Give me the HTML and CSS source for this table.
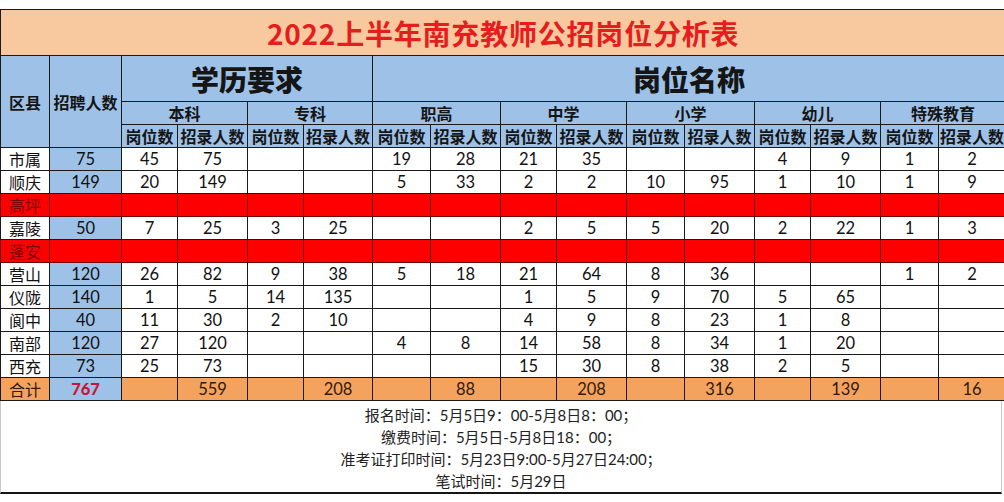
FILE: index.html
```html
<!DOCTYPE html>
<html lang="zh-CN">
<head>
<meta charset="utf-8">
<title>2022上半年南充教师公招岗位分析表</title>
<link rel="stylesheet" href="styles.css">
</head>
<body>
<div class="sheet">
<table class="grid">
  <colgroup>
    <col class="c-area"><col class="c-total">
    <col class="c-n"><col class="c-p">
    <col class="c-n"><col class="c-p2">
    <col class="c-n2"><col class="c-p">
    <col class="c-n"><col class="c-p">
    <col class="c-n2"><col class="c-p">
    <col class="c-n"><col class="c-p">
    <col class="c-n2"><col class="c-p3">
  </colgroup>
  <tr class="r-title"><td colspan="16" class="title">2022上半年南充教师公招岗位分析表</td></tr>
  <tr class="r-h1">
    <td rowspan="3" class="hd">区县</td>
    <td rowspan="3" class="hd">招聘人数</td>
    <td colspan="4" class="hd big">学历要求</td>
    <td colspan="10" class="hd big">岗位名称</td>
  </tr>
  <tr class="r-h2">
    <td colspan="2" class="hd">本科</td>
    <td colspan="2" class="hd">专科</td>
    <td colspan="2" class="hd">职高</td>
    <td colspan="2" class="hd">中学</td>
    <td colspan="2" class="hd">小学</td>
    <td colspan="2" class="hd">幼儿</td>
    <td colspan="2" class="hd">特殊教育</td>
  </tr>
  <tr class="r-h3">
    <td class="hd">岗位数</td><td class="hd">招录人数</td>
    <td class="hd">岗位数</td><td class="hd">招录人数</td>
    <td class="hd">岗位数</td><td class="hd">招录人数</td>
    <td class="hd">岗位数</td><td class="hd">招录人数</td>
    <td class="hd">岗位数</td><td class="hd">招录人数</td>
    <td class="hd">岗位数</td><td class="hd">招录人数</td>
    <td class="hd">岗位数</td><td class="hd">招录人数</td>
  </tr>
  <tr class="row"><td>市属</td><td class="blue">75</td><td>45</td><td>75</td><td></td><td></td><td>19</td><td>28</td><td>21</td><td>35</td><td></td><td></td><td>4</td><td>9</td><td>1</td><td>2</td></tr>
  <tr class="row"><td>顺庆</td><td class="blue">149</td><td>20</td><td>149</td><td></td><td></td><td>5</td><td>33</td><td>2</td><td>2</td><td>10</td><td>95</td><td>1</td><td>10</td><td>1</td><td>9</td></tr>
  <tr class="row red"><td>高坪</td><td></td><td></td><td></td><td></td><td></td><td></td><td></td><td></td><td></td><td></td><td></td><td></td><td></td><td></td><td></td></tr>
  <tr class="row"><td>嘉陵</td><td class="blue">50</td><td>7</td><td>25</td><td>3</td><td>25</td><td></td><td></td><td>2</td><td>5</td><td>5</td><td>20</td><td>2</td><td>22</td><td>1</td><td>3</td></tr>
  <tr class="row red"><td>蓬安</td><td></td><td></td><td></td><td></td><td></td><td></td><td></td><td></td><td></td><td></td><td></td><td></td><td></td><td></td><td></td></tr>
  <tr class="row"><td>营山</td><td class="blue">120</td><td>26</td><td>82</td><td>9</td><td>38</td><td>5</td><td>18</td><td>21</td><td>64</td><td>8</td><td>36</td><td></td><td></td><td>1</td><td>2</td></tr>
  <tr class="row"><td>仪陇</td><td class="blue">140</td><td>1</td><td>5</td><td>14</td><td>135</td><td></td><td></td><td>1</td><td>5</td><td>9</td><td>70</td><td>5</td><td>65</td><td></td><td></td></tr>
  <tr class="row"><td>阆中</td><td class="blue">40</td><td>11</td><td>30</td><td>2</td><td>10</td><td></td><td></td><td>4</td><td>9</td><td>8</td><td>23</td><td>1</td><td>8</td><td></td><td></td></tr>
  <tr class="row"><td>南部</td><td class="blue">120</td><td>27</td><td>120</td><td></td><td></td><td>4</td><td>8</td><td>14</td><td>58</td><td>8</td><td>34</td><td>1</td><td>20</td><td></td><td></td></tr>
  <tr class="row"><td>西充</td><td class="blue">73</td><td>25</td><td>73</td><td></td><td></td><td></td><td></td><td>15</td><td>30</td><td>8</td><td>38</td><td>2</td><td>5</td><td></td><td></td></tr>
  <tr class="row sum"><td>合计</td><td class="blue grand">767</td><td></td><td>559</td><td></td><td>208</td><td></td><td>88</td><td></td><td>208</td><td></td><td>316</td><td></td><td>139</td><td></td><td>16</td></tr>
</table>
<div class="notes">
  <p>报名时间：5月5日9：00-5月8日8：00；</p>
  <p>缴费时间：5月5日-5月8日18：00；</p>
  <p>准考证打印时间：5月23日9:00-5月27日24:00；</p>
  <p>笔试时间：5月29日</p>
</div>
</div>
</body>
</html>
```

FILE: styles.css
```css
html, body {
  margin: 0;
  padding: 0;
  background: #ffffff;
}
.sheet {
  padding-top: 9px;
  width: 1003px;
}
.grid {
  border-collapse: collapse;
  table-layout: fixed;
  width: 1002px;
  font-family: Lato, "Noto Sans CJK SC", sans-serif;
  font-size: 16.5px;
  color: #111111;
}
.c-area { width: 49px; }
.c-total { width: 72px; }
.c-n { width: 56px; }
.c-n2 { width: 58px; }
.c-p { width: 70px; }
.c-p2 { width: 69px; }
.c-p3 { width: 67px; }
.grid td {
  border: 1px solid #1a1a1a;
  padding: 0;
  text-align: center;
  vertical-align: middle;
  line-height: 18px;
  overflow: hidden;
  white-space: nowrap;
}
.r-title td { height: 45px; }
.r-h1 td { height: 45px; }
.r-h2 td, .r-h3 td { height: 22px; }
.row td { height: 22px; }
.title {
  background: #f8c89f;
  color: #e41d1d;
  font-family: "Noto Sans CJK SC", sans-serif;
  font-weight: 700;
  font-size: 28px;
  line-height: 32px;
  letter-spacing: 0.8px;
}
.hd {
  background: #9dc1e7;
  font-family: "Noto Sans CJK SC", sans-serif;
  font-weight: 700;
  font-size: 16px;
  color: #151515;
}
.hd.big {
  font-size: 28px;
  line-height: 32px;
  font-weight: 900;
}
.row td:first-child {
  font-family: "Noto Sans CJK SC", sans-serif;
  font-size: 16px;
}
.blue {
  background: #9dc1e7;
}
.red td {
  background: #fe0000;
  border-color: #6b0000;
}
.red td:first-child {
  color: #7a0000;
}
.sum td {
  background: #f4a35f;
  color: #2f1a0c;
}
.sum td.blue {
  background: #9dc1e7;
}
.grand {
  color: #c8143a !important;
  font-weight: 900;
}
.notes {
  box-sizing: border-box;
  width: 1002px;
  padding: 3px 0 0;
  border-left: 1px solid #c8c8c8;
  border-right: 1px solid #c8c8c8;
  border-bottom: 2px solid #151515;
  font-family: Lato, "Noto Sans CJK SC", sans-serif;
  font-size: 15px;
  color: #222222;
  text-align: center;
}
.notes p {
  margin: 0;
  line-height: 22px;
}
```
